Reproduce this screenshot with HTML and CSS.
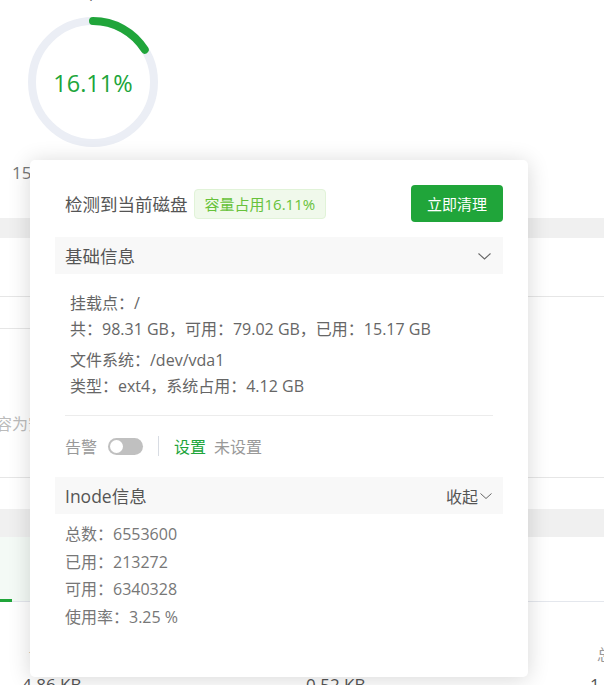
FILE: index.html
```html
<!DOCTYPE html>
<html lang="zh-CN">
<head>
<meta charset="utf-8">
<title>磁盘</title>
<link rel="stylesheet" href="styles.css">
</head>
<body>
<div class="page">
  <div class="usage">
    <div class="usage-path">/</div>
    <svg class="ring" width="130" height="130" viewBox="0 0 130 130">
      <circle cx="65" cy="65" r="61" fill="none" stroke="#ebeef5" stroke-width="8"/>
      <circle cx="65" cy="65" r="61" fill="none" stroke="#20a53a" stroke-width="8" stroke-linecap="round" stroke-dasharray="61.7 400" transform="rotate(-90 65 65)"/>
      <text class="ring-text" x="65" y="66" text-anchor="middle" dominant-baseline="central">16.11%</text>
    </svg>
    <div class="usage-size">15.17 GB</div>
  </div>
  <div class="thead"></div>
  <div class="row row-a"></div>
  <div class="row row-b"></div>
  <div class="row row-c"><span class="muted-text">内容为安全目录</span></div>
  <div class="row row-d"></div>
  <div class="thead thead-2"></div>
  <div class="tabs"><div class="tab-active"></div></div>
  <div class="stats">
    <div class="stat"><div class="stat-label">读取</div><div class="stat-value">4.86 KB</div></div>
    <div class="stat"><div class="stat-label">写入</div><div class="stat-value">0.52 KB</div></div>
    <div class="stat"><div class="stat-label">总计</div><div class="stat-value">1.38 MB</div></div>
  </div>

  <div class="popup">
    <div class="pop-head">
      <div class="pop-title">检测到当前磁盘</div>
      <span class="tag">容量占用16.11%</span>
      <button class="btn">立即清理</button>
    </div>
    <div class="panel-head">
      <span class="panel-title">基础信息</span>
      <svg class="chev" width="13" height="7" viewBox="0 0 13 7"><polyline points="0.5,0.5 6.5,6 12.5,0.5" fill="none" stroke="#666" stroke-width="1.1"/></svg>
    </div>
    <div class="panel-body">
      <div class="group">
        <div>挂载点：/</div>
        <div>共：98.31 GB，可用：79.02 GB，已用：15.17 GB</div>
      </div>
      <div class="group">
        <div>文件系统：/dev/vda1</div>
        <div>类型：ext4，系统占用：4.12 GB</div>
      </div>
    </div>
    <div class="divider"></div>
    <div class="alarm">
      <span class="alarm-label">告警</span>
      <span class="switch"><span class="knob"></span></span>
      <span class="vline"></span>
      <span class="link">设置</span>
      <span class="unset">未设置</span>
    </div>
    <div class="panel-head panel-head-2">
      <span class="panel-title">Inode信息</span>
      <span class="collapse">收起<svg class="chev-sm" width="12" height="6" viewBox="0 0 12 6"><polyline points="0.5,0.5 6,5.5 11.5,0.5" fill="none" stroke="#666" stroke-width="1"/></svg></span>
    </div>
    <div class="inode-body">
      <div>总数：6553600</div>
      <div>已用：213272</div>
      <div>可用：6340328</div>
      <div>使用率：3.25 %</div>
    </div>
  </div>
</div>
</body>
</html>
```
FILE: styles.css
```css
* { box-sizing: border-box; }
html, body { margin: 0; padding: 0; background: #fff; }
body {
  font-family: "Open Sans", "Noto Sans CJK SC", sans-serif;
  color: #666;
}
.page {
  position: relative;
  width: 604px;
  height: 685px;
  overflow: hidden;
}
.usage {
  height: 218px;
  display: flex;
  flex-direction: column;
}
.usage-path {
  font-size: 16px;
  line-height: 20px;
  margin-top: -15px;
  padding-left: 90px;
  color: #666;
}
.ring {
  display: block;
  margin-top: 12px;
  margin-left: 28px;
}
.ring-text {
  font-family: "Open Sans", sans-serif;
  font-size: 23.5px;
  fill: #20a53a;
}
.usage-size {
  margin-top: 16px;
  padding-left: 12px;
  font-size: 17px;
  line-height: 20px;
  color: #777;
}
.thead {
  height: 20px;
  background: #f0f0f0;
}
.thead-2 { height: 28px; }
.row { border-bottom: 1px solid #e6e6e6; }
.row-a { height: 59px; }
.row-b { height: 32px; width: 300px; }
.row-c {
  height: 149px;
  padding-top: 84px;
  font-size: 16px;
  line-height: 22px;
}
.muted-text { margin-left: -20px; color: #bbb; display: inline-block; }
.row-d { height: 31px; border-bottom: none; }
.tabs {
  height: 65px;
  border-bottom: 1px solid #e4e7ed;
  display: flex;
  align-items: flex-end;
}
.tab-active {
  width: 120px;
  height: 64px;
  background: #f4faf6;
  position: relative;
}
.tab-active::after {
  content: "";
  position: absolute;
  left: 0;
  bottom: -1px;
  width: 12px;
  height: 3px;
  background: #20a53a;
}
.stats {
  display: grid;
  grid-template-columns: 284px 284px 284px;
  padding-left: 22px;
  padding-top: 42px;
}
.stat-label {
  font-size: 15px;
  line-height: 20px;
  padding-left: 7px;
  color: #999;
}
.stat-value {
  margin-top: 11px;
  font-size: 17px;
  line-height: 20px;
  color: #555;
}

/* popup */
.popup {
  position: absolute;
  left: 30px;
  top: 160px;
  width: 498px;
  height: 517px;
  background: #fff;
  border-radius: 5px;
  box-shadow: 0 2px 22px rgba(0, 0, 0, 0.16);
  padding: 25px 25px 0 25px;
}
.pop-head {
  display: flex;
  align-items: center;
  height: 37px;
  padding-left: 10px;
}
.pop-title {
  font-size: 17.5px;
  color: #555;
  line-height: 24px;
}
.tag {
  margin-left: 6px;
  height: 30px;
  line-height: 28px;
  padding: 0 10px;
  font-size: 15px;
  color: #67c23a;
  background: #f0f9eb;
  border: 1px solid #e1f3d8;
  border-radius: 4px;
}
.btn {
  margin-left: auto;
  width: 92px;
  height: 37px;
  border: none;
  border-radius: 4px;
  background: #20a53a;
  color: #fff;
  font-family: "Open Sans", "Noto Sans CJK SC", sans-serif;
  font-size: 15px;
  padding: 0;
}
.panel-head {
  margin-top: 15px;
  height: 37px;
  background: #f8f8f8;
  display: flex;
  align-items: center;
  justify-content: space-between;
  padding: 0 11px 0 10px;
}
.panel-title {
  font-size: 17.5px;
  color: #555;
}
.chev { margin-right: 1px; margin-top: 1px; }
.panel-body {
  padding: 16px 15px 0;
  font-size: 16px;
  line-height: 26px;
  color: #666;
}
.group + .group { margin-top: 5px; }
.divider {
  margin: 16px 10px 0;
  height: 1px;
  background: #ececec;
}
.alarm {
  margin-top: 15px;
  height: 30px;
  display: flex;
  align-items: center;
  padding-left: 10px;
  font-size: 16px;
}
.alarm-label { color: #999; }
.switch {
  margin-left: 11px;
  width: 35px;
  height: 17px;
  border-radius: 9px;
  background: #c0c0c0;
  position: relative;
  display: inline-block;
}
.knob {
  position: absolute;
  left: 2px;
  top: 2px;
  width: 13px;
  height: 13px;
  border-radius: 50%;
  background: #fff;
}
.vline {
  margin-left: 15px;
  width: 1px;
  height: 20px;
  background: #d8dce3;
}
.link { margin-left: 15px; color: #20a53a; }
.unset { margin-left: 8px; color: #999; }
.panel-head-2 { margin-top: 16px; }
.collapse {
  display: flex;
  align-items: center;
  font-size: 16px;
  color: #555;
}
.chev-sm { margin-left: 2px; }
.inode-body {
  padding: 7px 10px 0;
  font-size: 16px;
  line-height: 27.5px;
  color: #777;
}
```
